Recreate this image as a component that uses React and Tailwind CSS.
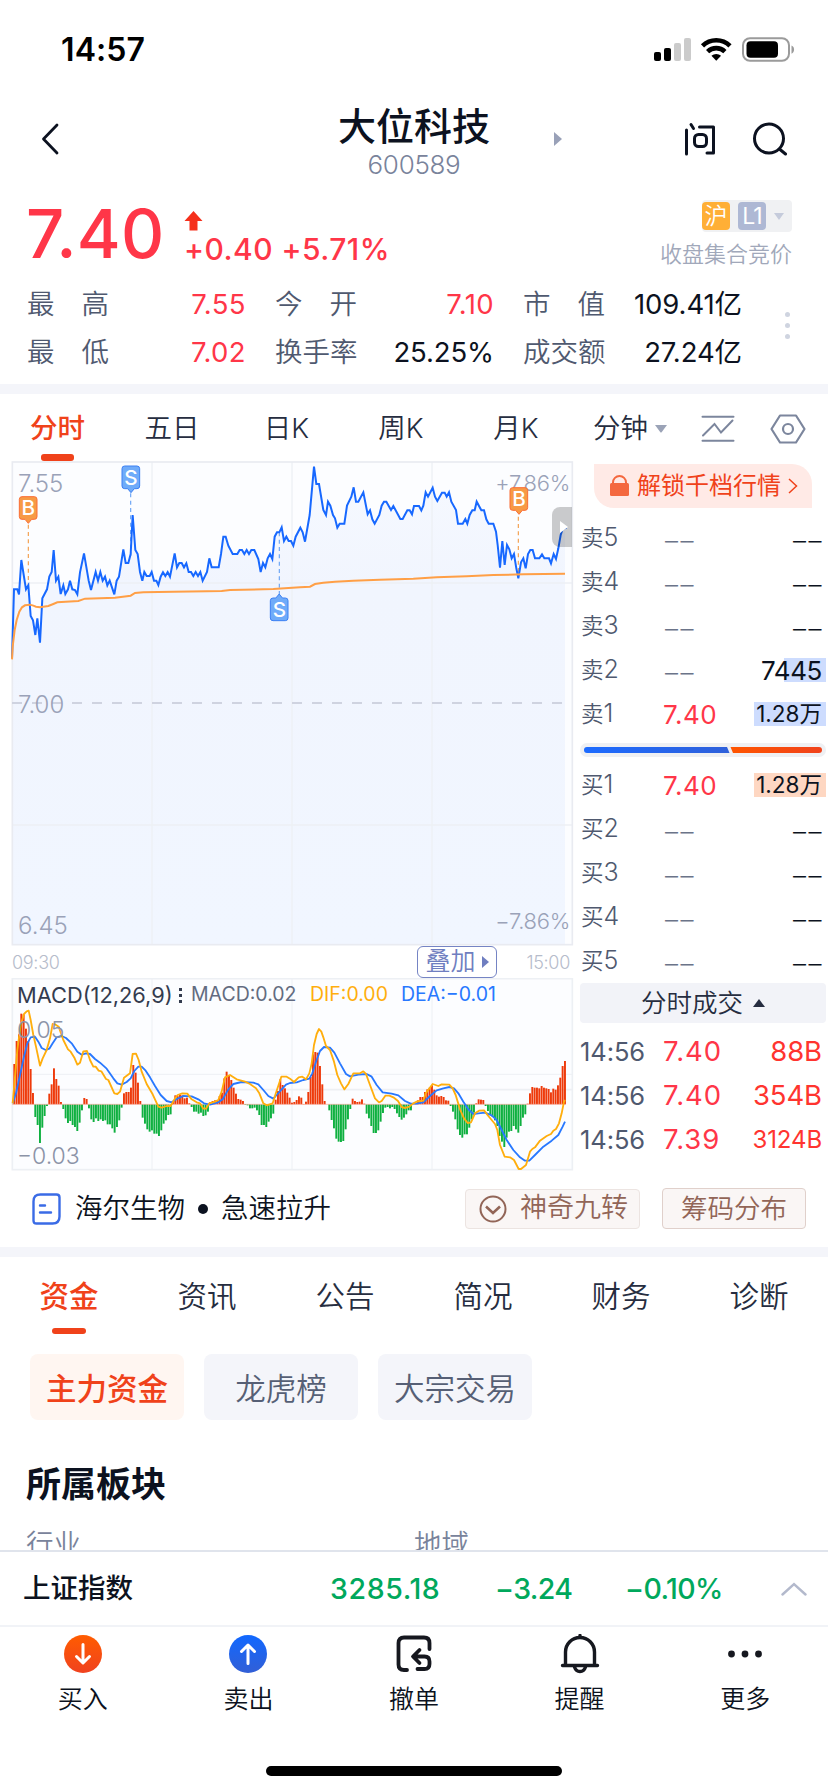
import { clsx } from "clsx";

const stats = [
  [
    { label: ["最", "高"], value: "7.55", up: true },
    { label: ["今", "开"], value: "7.10", up: true },
    { label: ["市", "值"], value: "109.41亿" },
  ],
  [
    { label: ["最", "低"], value: "7.02", up: true },
    { label: ["换", "手", "率"], value: "25.25%" },
    { label: ["成", "交", "额"], value: "27.24亿" },
  ],
];

const sells = [
  { name: "卖5" },
  { name: "卖4" },
  { name: "卖3" },
  { name: "卖2", volume: "7445", depth: 42 },
  { name: "卖1", price: "7.40", volume: "1.28万", depth: 72 },
];

const buys = [
  { name: "买1", price: "7.40", volume: "1.28万", depth: 72 },
  { name: "买2" },
  { name: "买3" },
  { name: "买4" },
  { name: "买5" },
];

const trades = [
  { time: "14:56", price: "7.40", volume: "88B" },
  { time: "14:56", price: "7.40", volume: "354B" },
  { time: "14:56", price: "7.39", volume: "3124B", small: true },
];

// chart data, three units per pixel
const PRICE =
  "36,805 42,598 52,598 57,613 64,510 78,598 85,586 92,678 99,691 106,735 112,685 120,758 127,625 141,598 148,560 155,546 161,480 168,572 175,560 182,612 190,586 196,612 204,598 210,572 217,598 225,600 232,613 240,547 252,490 266,572 273,600 287,546 294,572 301,546 308,572 315,560 322,586 329,572 343,613 350,572 357,560 370,478 377,519 385,519 392,492 398,375 406,480 413,492 420,546 427,572 433,546 440,558 449,558 455,546 462,572 469,572 475,585 482,560 489,547 496,558 503,546 510,560 524,490 531,532 538,519 545,519 552,532 559,520 566,546 573,546 580,558 587,546 594,558 601,546 608,572 621,546 628,505 635,532 656,532 663,492 670,440 677,440 685,467 698,492 712,492 719,480 726,480 733,492 740,480 747,492 754,480 763,480 775,507 782,546 789,519 796,532 803,505 810,492 817,507 824,440 831,427 838,427 845,412 852,453 859,440 866,453 873,453 880,467 887,440 901,413 908,427 915,455 929,375 942,230 949,282 957,282 970,360 978,375 984,335 991,347 999,375 1005,385 1012,413 1019,401 1033,401 1041,347 1054,320 1061,292 1068,335 1075,335 1090,307 1103,373 1110,361 1117,388 1124,401 1138,375 1145,347 1152,335 1159,335 1173,360 1180,348 1201,387 1208,387 1222,361 1229,361 1236,373 1242,348 1257,348 1264,361 1270,347 1277,307 1284,320 1298,293 1305,320 1312,333 1326,308 1334,308 1340,320 1347,307 1354,335 1368,360 1374,401 1388,401 1396,387 1402,401 1409,375 1417,361 1424,361 1430,335 1444,361 1452,361 1459,388 1466,401 1480,401 1488,425 1493,465 1500,533 1507,453 1514,525 1521,465 1528,478 1535,505 1542,492 1549,535 1555,565 1563,517 1570,505 1577,535 1584,492 1591,480 1598,480 1605,505 1618,505 1626,493 1633,505 1647,505 1653,520 1661,492 1668,507 1675,475 1682,435 1688,417 1700,413";

const AVERAGE =
  "36,808 38,770 44,720 50,690 58,665 66,652 75,646 90,644 100,647 108,650 120,652 145,648 160,642 172,637 235,633 255,626 345,623 392,617 405,609 430,607 520,605 620,604 665,603 690,600 820,597 900,592 930,590 945,582 970,578 1005,575 1060,572 1140,569 1240,566 1310,562 1400,559 1480,555 1570,553 1695,551";

const DIF =
  "38,430 45,350 52,270 62,195 72,162 80,154 86,152 92,180 100,225 108,260 120,317 128,295 140,270 150,235 158,192 165,193 176,200 190,240 204,268 212,275 224,295 232,314 240,308 250,274 261,273 270,300 280,320 287,320 296,332 304,334 318,357 325,360 343,400 352,402 360,395 372,353 390,340 398,282 408,281 416,300 425,335 440,372 458,403 475,440 485,443 500,438 512,438 525,415 533,405 547,400 562,401 575,418 590,427 600,430 610,446 618,446 628,430 645,425 655,420 665,395 675,352 690,345 710,358 735,365 750,372 768,385 778,400 790,430 800,436 818,430 830,392 844,350 860,350 870,356 882,366 896,352 907,350 918,358 928,340 935,310 942,255 950,222 957,207 964,215 970,232 978,258 990,270 1002,305 1012,345 1023,370 1033,388 1045,372 1060,340 1080,340 1090,334 1098,342 1110,375 1125,415 1137,427 1145,423 1156,407 1168,407 1180,412 1194,423 1205,441 1215,444 1228,440 1240,430 1252,424 1270,422 1277,400 1298,372 1315,378 1325,373 1348,374 1358,385 1367,405 1380,448 1392,475 1403,489 1413,487 1425,460 1437,452 1452,451 1465,468 1485,492 1492,510 1500,555 1514,590 1530,592 1542,600 1556,627 1563,627 1578,615 1590,575 1597,567 1605,562 1620,542 1640,528 1653,522 1660,512 1668,507 1677,490 1685,460 1692,425 1695,420";

const DEA =
  "38,430 48,400 60,345 72,290 82,250 92,232 105,230 115,245 125,264 137,270 148,266 158,250 170,232 185,228 198,234 215,250 232,275 245,284 258,280 270,282 285,297 300,308 320,326 340,355 352,370 365,374 380,366 392,355 403,333 415,320 425,320 437,332 450,352 465,378 482,405 500,423 515,427 530,417 550,408 575,409 595,418 612,430 630,434 655,427 668,418 685,388 700,372 725,366 760,368 775,373 790,390 805,408 820,416 830,405 845,388 858,374 870,369 890,367 910,360 928,356 937,340 948,305 960,273 972,261 990,263 1003,278 1020,310 1038,342 1050,349 1075,344 1100,342 1115,350 1130,375 1148,397 1175,401 1195,406 1215,423 1232,431 1250,431 1270,427 1290,408 1310,391 1330,385 1348,381 1362,385 1375,400 1390,425 1405,448 1420,462 1435,460 1455,458 1475,466 1490,480 1505,510 1520,540 1540,570 1560,592 1575,602 1588,602 1605,585 1630,560 1655,542 1675,525 1688,500 1695,485";

const BARS = [
  121, 190, 210, 272, 270, 227, 190, 106, 34, -38, -62, -116, -70, -35, -5, 32, 60, 108, 76, 56, 7, -14, -42, -56,
  -50, -62, -68, -80, -55, -18, 19, 16, -12, -45, -53, -42, -50, -45, -50, -48, -60, -60, -72, -85, -68, -48, -10, 33,
  37, 37, 50, 118, 95, 65, 10, -40, -58, -75, -82, -78, -88, -88, -95, -78, -58, -48, -32, -30, 8, 27, 25, 28,
  27, 18, 20, 3, -8, -22, -22, -28, -25, -35, -33, -22, 7, 10, 12, 12, 25, 35, 78, 98, 88, 73, 50, 32,
  16, 14, 10, -2, -3, -12, -12, -10, -18, -32, -62, -62, -68, -52, -42, -28, 14, 40, 75, 58, 48, 35, 20, 5,
  7, 13, 24, 20, 1, 8, 37, 82, 150, 157, 155, 115, 60, 10, 0, -18, -47, -72, -103, -112, -113, -110, -75, -45,
  -14, 17, 10, 7, 8, 15, 2, -28, -42, -65, -86, -86, -78, -52, -26, -10, -8, -12, -8, -14, -27, -38, -46, -40,
  -30, -18, -18, 0, 5, 12, 22, 22, 37, 45, 50, 57, 44, 27, 23, 25, 22, 12, 11, -5, -22, -45, -75, -92,
  -100, -90, -90, -70, -45, -25, 3, 15, 14, 13, -5, -20, -30, -38, -48, -65, -95, -112, -128, -100, -82, -80, -65, -75,
  -85, -65, -40, -30, 2, 33, 52, 50, 50, 48, 55, 50, 48, 46, 36, 47, 44, 57, 80, 115, 130,
];

function StatusBar() {
  return (
    <div className="flex h-[86px] items-start justify-between pt-[30px] pr-[33px] pl-[61px]">
      <span className="text-[32px] leading-[40px] font-semibold tracking-[0.1px] text-black">14:57</span>
      <svg className="mt-[6px]" width="142" height="28" viewBox="0 0 142 28">
        <rect x="1" y="16" width="7" height="9" rx="2" />
        <rect x="11" y="12" width="7" height="13" rx="2" />
        <rect x="21" y="7" width="7" height="18" rx="2" fill="#cbcbcb" />
        <rect x="31" y="2" width="7" height="23" rx="2" fill="#cbcbcb" />
        <g fill="none" stroke="#000" strokeWidth="4.6">
          <path d="M49.5 9.8a20 20 0 0 1 27.5 0" />
          <path d="M54.6 15.6a12.5 12.5 0 0 1 17.3 0" />
        </g>
        <path d="M63.25 24.8l-4.8-5a7 7 0 0 1 9.6 0z" />
        <rect x="90" y="2.2" width="46" height="22.6" rx="7" fill="none" stroke="#9b9b9b" strokeWidth="2" />
        <rect x="93.5" y="5.3" width="31.5" height="16.4" rx="4" />
        <path d="M138.5 9.5c3.4 1.2 3.4 7 0 8.200z" fill="#9b9b9b" />
      </svg>
    </div>
  );
}

function Header() {
  return (
    <div className="grid h-[106px] grid-cols-[1fr_152px_1fr] items-center text-[#0c1220]">
      <div className="pl-[40px]">
        <svg width="20" height="34" viewBox="0 0 20 34" fill="none" stroke="currentColor" strokeWidth="2.8" strokeLinecap="round" strokeLinejoin="round">
          <path d="M17 3L3.500 17L17 31" />
        </svg>
      </div>
      <div className="flex flex-col items-center pt-[7px]">
        <h1 className="text-[38px] leading-[44px] font-medium whitespace-nowrap">大位科技</h1>
        <span className="text-[26px] leading-[34px] tracking-[-0.3px] text-[#79839b]">600589</span>
      </div>
      <div className="flex items-center justify-between pr-[40px] pl-[64px]">
        <svg width="8" height="14" viewBox="0 0 8 14" fill="#99a1b8">
          <path d="M0 0L8 7L0 14z" />
        </svg>
        <div className="flex items-center gap-[36px]">
          <svg width="32" height="34" viewBox="0 0 32 34" fill="none" stroke="currentColor" strokeWidth="3" strokeLinecap="round" strokeLinejoin="round">
            <path d="M2.500 8V32M7 2.500L9.500 6.500M15.500 5H29.500V31H23" />
            <rect x="10.500" y="12.500" width="12" height="12" rx="4" />
          </svg>
          <svg width="36" height="34" viewBox="0 0 36 34" fill="none" stroke="currentColor" strokeWidth="3" strokeLinecap="round">
            <circle cx="17" cy="16.500" r="14.500" />
            <path d="M28 27.500L33.500 32" />
          </svg>
        </div>
      </div>
    </div>
  );
}

function Quote() {
  return (
    <section className="flex h-[192px] flex-col pl-[27px]">
      <div className="flex h-[88px] justify-between pr-[36px]">
        <div className="flex">
          <span className="-ml-px w-[158px] pt-[2px] text-[67px] leading-[80px] font-medium tracking-[0.3px] text-[#ff3648]">7.40</span>
          <div className="flex flex-col pt-[19px]">
            <svg width="19" height="20" viewBox="0 0 19 20" fill="#f5301c">
              <path d="M9.500 0L18.500 10H13.500V19.500H5.500V10H.5z" />
            </svg>
            <span className="text-[30px] leading-[36px] font-medium tracking-[0.45px] whitespace-pre text-[#ff3648]">+0.40 +5.71%</span>
          </div>
        </div>
        <div className="flex flex-col items-end pt-[8px]">
          <div className="flex h-8 items-center gap-2 rounded bg-[#f0f1f3] pr-2 text-[23px] leading-[28px] text-white">
            <span className="flex size-7 items-center justify-center rounded bg-[#ffaf36]">沪</span>
            <span className="flex size-7 items-center justify-center rounded bg-[#aeb8d4] font-normal tracking-[-1px]">L1</span>
            <svg width="10" height="7" viewBox="0 0 10 7" fill="#c5cbdb">
              <path d="M0 0H10L5 7z" />
            </svg>
          </div>
          <span className="pt-[6px] text-[22px] leading-[32px] text-[#a1a8ba]">收盘集合竞价</span>
        </div>
      </div>
      <div className="flex pt-px">
        <div className="flex w-[715px] flex-col">
          {stats.map((row, i) => (
            <div key={i} className="grid h-[48px] grid-cols-[219px_219px_219px] items-center gap-x-[29px] text-[27.500px]">
              {row.map((s) => (
                <div key={s.value} className="flex items-center justify-between">
                  <span className="flex w-[82px] justify-between text-[#4f596f]">
                    {s.label.map((c) => (
                      <span key={c}>{c}</span>
                    ))}
                  </span>
                  <span className={clsx("text-[27.500px] font-[380]", s.up ? "tracking-[0.4px] text-[#ff3648]" : "tracking-[-0.1px] text-[#0c1220]")}>{s.value}</span>
                </div>
              ))}
            </div>
          ))}
        </div>
        <div className="ml-[43px] flex flex-col gap-[6px] pt-[31px]">
          <i className="size-[5px] rounded-full bg-[#cfd4e0]" />
          <i className="size-[5px] rounded-full bg-[#cfd4e0]" />
          <i className="size-[5px] rounded-full bg-[#cfd4e0]" />
        </div>
      </div>
    </section>
  );
}

function PeriodTabs() {
  return (
    <nav className="flex h-[67px] items-center pt-[2px] text-[27.500px] text-[#262d40]">
      <span className="relative w-[115px] text-center font-medium text-[#f0421a]">
        分时
        <i className="absolute -bottom-[12px] left-[41px] h-[7px] w-[33px] rounded-[3px] bg-[#f0421a]" />
      </span>
      <span className="w-[114px] text-center">五日</span>
      <span className="w-[115px] text-center">日K</span>
      <span className="w-[114px] text-center">周K</span>
      <span className="w-[116px] text-center">月K</span>
      <span className="flex w-[127px] items-center gap-[7px] pl-[19px]">
        分钟
        <svg width="12" height="8" viewBox="0 0 12 8" fill="#9ba3b7">
          <path d="M0 0H12L6.800 7Q6 8 5.200 7z" />
        </svg>
      </span>
      <span className="flex flex-1 items-center justify-between pr-[22px]">
        <svg width="34" height="28" viewBox="0 0 34 28" fill="none" stroke="#7c869d" strokeWidth="2" strokeLinecap="round">
          <path d="M1.500 1.700H32.500M1.500 25.700H32.500M2 20.500L13.500 9L20 17.500L31.500 5.500" />
        </svg>
        <svg width="36" height="30" viewBox="0 0 36 30" fill="none" stroke="#7c869d" strokeWidth="2.200" strokeLinejoin="round">
          <path d="M10 1.500H26L34.500 15L26 28.500H10L1.500 15z" />
          <circle cx="18" cy="15" r="5" />
        </svg>
      </span>
    </nav>
  );
}

function Marker({ x, y, letter, up }) {
  const buy = letter === "B";
  // tail sits below the box, or above it when the marker hangs under the line
  const d = up
    ? `M${x + 8},${y} h8.5 l10,-12 l10,12 h8.5 q8,0 8,8 v52 q0,8 -8,8 h-37 q-8,0 -8,-8 v-52 q0,-8 8,-8 z`
    : `M${x + 8},${y} h37 q8,0 8,8 v52 q0,8 -8,8 h-8 l-10,12 l-10,-12 h-9 q-8,0 -8,-8 v-52 q0,-8 8,-8 z`;
  return (
    <g>
      <path d={d} fill={buy ? "#f79a45" : "#6fabf9"} stroke={buy ? "#fb6d34" : "#3d80f3"} strokeWidth="3" />
      <text x={x + 27} y={y + 56} textAnchor="middle" fontSize="62" fontWeight="500" fill="#fff">
        {letter}
      </text>
    </g>
  );
}

function PriceChart() {
  return (
    <div className="relative h-[485px] text-[#9aa2b8]">
      <svg width="576" height="485" viewBox="0 213 1728 1455">
        <defs>
          <linearGradient id="area" x1="0" y1="0" x2="0" y2="1">
            <stop offset="0" stopColor="#f6f9ff" />
            <stop offset="0.25" stopColor="#f1f5fe" />
            <stop offset="1" stopColor="#f1f6ff" />
          </linearGradient>
        </defs>
        <rect x="36" y="216" width="1682" height="1448" fill="#fcfdff" />
        <path d={`M36,1664 L${PRICE} L1695,413 V1664 z`} fill="url(#area)" />
        <g fill="none" stroke="#edf0f5" strokeWidth="4">
          <path d="M456,216V1664M876,216V1664M1296,216V1664M36,579H1718M36,1305H1718" />
        </g>
        <rect x="37" y="216" width="1680" height="1448" fill="none" stroke="#e9ebf1" strokeWidth="5" />
        <path d="M36,939H1700" stroke="#cfd3e0" strokeWidth="6" strokeDasharray="30 30" />
        <g fill="none" strokeWidth="3.500" strokeDasharray="12 10">
          <path d="M85,404V586M1555,380V560" stroke="#f4a04e" />
          <path d="M392,310V500M838,427V612" stroke="#6ca5f5" />
        </g>
        <polyline points={PRICE} fill="none" stroke="#1768ff" strokeWidth="6" />
        <polyline points={AVERAGE} fill="none" stroke="#ff9f46" strokeWidth="6" />
      </svg>
      <span className="absolute top-[5px] left-[18px] text-[24px] leading-[36px] font-light">7.55</span>
      <span className="absolute top-[4px] right-[6px] text-[22px] leading-[36px] font-light tracking-[-0.3px]">+7.86%</span>
      <span className="absolute top-[226px] left-[18px] text-[24px] leading-[36px] font-light">7.00</span>
      <span className="absolute top-[447px] left-[18px] text-[24px] leading-[36px] font-light">6.45</span>
      <span className="absolute top-[442px] right-[6px] text-[22px] leading-[36px] font-light tracking-[-0.3px]">−7.86%</span>
      <svg className="absolute top-0 left-0" width="576" height="485" viewBox="0 213 1728 1455">
        <Marker x={58} y={320} letter="B" />
        <Marker x={366} y={228} letter="S" />
        <Marker x={811} y={624} letter="S" up />
        <Marker x={1530} y={293} letter="B" />
      </svg>
      <div className="absolute top-[46px] left-[552px] flex h-[40px] w-[20px] items-center justify-center rounded-l-lg bg-black/20 pl-[3px]">
        <svg width="8" height="12" viewBox="0 0 8 12" fill="#fff">
          <path d="M0 0L8 6L0 12z" />
        </svg>
      </div>
    </div>
  );
}

function MacdChart() {
  return (
    <div className="relative h-[193px]">
      <svg width="576" height="193" viewBox="0 54 1728 579">
        <rect x="36" y="56" width="1682" height="573" fill="#fcfdff" />
        <g fill="none" stroke="#edf0f4" strokeWidth="5">
          <path d="M456,56V629M876,56V629M1296,56V629M36,343H1718" strokeWidth="3" />
          <path d="M36,389H1718" />
          <rect x="37" y="56" width="1680" height="573" />
        </g>
        {BARS.map((v, i) => (
          <rect
            key={i}
            x={40 + i * 7}
            y={v > 0 ? 433 - v : 433}
            width="5.800"
            height={Math.abs(v)}
            fill={v > 0 ? "#ee3a0b" : "#0fb040"}
          />
        ))}
        <path d="M36,433H1697" stroke="#f7a99a" strokeWidth="2" />
        <polyline points={DEA} fill="none" stroke="#2878ff" strokeWidth="5.500" strokeLinejoin="round" />
        <polyline points={DIF} fill="none" stroke="#ffae0d" strokeWidth="5.500" strokeLinejoin="round" />
      </svg>
      <div className="absolute top-[2px] left-[17px] flex h-[30px] items-center text-[19.500px] font-normal whitespace-nowrap">
        <span className="w-[161px] text-[21.800px] text-[#333b4e]">MACD(12,26,9)</span>
        <span className="flex w-[13px] flex-col gap-[3px] pl-px">
          <i className="size-[3px] bg-[#333b4e]" />
          <i className="size-[3px] bg-[#333b4e]" />
          <i className="size-[3px] bg-[#333b4e]" />
        </span>
        <span className="w-[119px] text-[#626b80]">MACD:0.02</span>
        <span className="w-[91px] text-[#ffae0d]">DIF:0.00</span>
        <span className="text-[#2878ff]">DEA:−0.01</span>
      </div>
      <span className="absolute top-[34px] left-[17px] text-[23px] leading-[36px] font-light text-[#8b93a7]">0.05</span>
      <span className="absolute top-[160px] left-[17px] text-[23px] leading-[36px] font-light text-[#8b93a7]">−0.03</span>
    </div>
  );
}

function Level({ name, price, volume, depth = 0, side }) {
  return (
    <div className="flex h-[44px] items-center text-[26px] text-[#4f596f]">
      <span className="w-[83px] pl-px text-[22.500px]">
        {name.slice(0, 1)}
        <span className="text-[25px]">{name.slice(1)}</span>
      </span>
      {price ? (
        <span className="font-[380] tracking-[0.5px] text-[#ff3648]">{price}</span>
      ) : (
        <span className="pt-[5px] pl-[2px] tracking-[2.500px] text-[#6b7489]">––</span>
      )}
      <span className="relative ml-auto flex h-6 items-center pr-[4px] text-[#0c1220]">
        <i
          className={clsx("absolute inset-y-0 right-0", side === "buy" ? "bg-[#fed7c2]" : "bg-[#cddcfe]")}
          style={{ width: depth }}
        />
        {volume ? (
          <span className={clsx("relative font-[380]", volume.endsWith("万") ? "text-[22.500px]" : "text-[26px] tracking-[-0.4px]")}>{volume}</span>
        ) : (
          <span className="-mr-[2px] pt-[5px] tracking-[2.500px]">––</span>
        )}
      </span>
    </div>
  );
}

function OrderBook() {
  return (
    <aside className="flex w-[248px] flex-col pr-[2px]">
      <div className="mt-[3px] ml-[14px] flex h-[44px] w-[218px] items-center rounded-tr-[20px] rounded-bl-[20px] bg-[#ffeae6] pl-[16px] text-[#f0421a]">
        <svg width="19" height="22" viewBox="0 0 19 22">
          <rect y="8" width="19" height="13" rx="1.500" fill="#f4683f" />
          <path d="M3 9V7.500a6.500 6.500 0 0 1 13 0V9" fill="none" stroke="#f4683f" strokeWidth="2" />
        </svg>
        <span className="pl-[8px] text-[24px] font-normal">解锁千档行情</span>
        <svg className="ml-[7px]" width="10" height="16" viewBox="0 0 10 16" fill="none" stroke="#f0421a" strokeWidth="1.500">
          <path d="M1 1L8.500 8L1 15" />
        </svg>
      </div>
      <div className="flex flex-col pt-[8px]">
        {sells.map((l) => (
          <Level key={l.name} side="sell" {...l} />
        ))}
      </div>
      <div className="mt-[7px] mb-[6px] flex h-[14px] items-center rounded-full bg-[#eff0f3] px-1">
        <svg width="238" height="6" viewBox="0 0 238 6">
          <defs>
            <linearGradient id="sellBar">
              <stop stopColor="#1d6bff" />
              <stop offset="1" stopColor="#2f60da" />
            </linearGradient>
            <linearGradient id="buyBar">
              <stop stopColor="#ff5500" />
              <stop offset="1" stopColor="#f0431c" />
            </linearGradient>
          </defs>
          <path d="M3 0H143L145.500 6H3a3 3 0 0 1 0-6z" fill="url(#sellBar)" />
          <path d="M146.500 0H235a3 3 0 0 1 0 6H149z" fill="url(#buyBar)" />
        </svg>
      </div>
      <div className="flex flex-col">
        {buys.map((l) => (
          <Level key={l.name} side="buy" {...l} />
        ))}
      </div>
      <div className="flex h-[40px] items-center justify-center gap-[10px] rounded bg-[#f2f3f8] text-[25.500px] text-[#262d40]">
        分时成交
        <svg width="12" height="8" viewBox="0 0 12 8" fill="#262d40">
          <path d="M6 0L12 8H0z" />
        </svg>
      </div>
      <div className="flex flex-col pt-[7px]">
        {trades.map((t, i) => (
          <div key={i} className="flex h-[44px] items-center text-[27.500px] font-[380]">
            <span className="w-[83px] text-[25.500px] tracking-[-0.1px] text-[#4f596f]">{t.time}</span>
            <span className="tracking-[1px] text-[#ff3648]">{t.price}</span>
            <span className={clsx("ml-auto pr-[4px] text-[#ff342f]", t.small ? "text-[24px] tracking-[-0.1px]" : "text-[27.500px] tracking-[-0.1px]")}>{t.volume}</span>
          </div>
        ))}
      </div>
    </aside>
  );
}

function NewsRow() {
  return (
    <div className="flex h-[77px] items-center justify-between pr-[22px] pl-[32px]">
      <div className="flex items-center">
        <svg width="29" height="32" viewBox="0 0 29 32" fill="none" stroke="#3a6be6" strokeWidth="2.400" strokeLinecap="round">
          <path d="M8.500 1.500H24.500Q27.500 1.500 27.500 4.500V23.500Q27.500 30.500 20.500 30.500H4.500Q1.500 30.500 1.500 27.500V8.500Q1.500 1.500 8.500 1.500z" strokeLinejoin="round" />
          <path d="M8 12.500H13M8 19.500H19" />
        </svg>
        <span className="pl-[14px] text-[27.500px] text-[#0c1220]">海尔生物</span>
        <i className="mx-[13px] size-[10px] rounded-full bg-[#0c1220]" />
        <span className="text-[27.500px] text-[#0c1220]">急速拉升</span>
      </div>
      <div className="flex items-center gap-[22px] text-[#926557]">
        <div className="flex h-[40px] w-[175px] items-center justify-center gap-[13px] rounded border-[1.500px] border-[#ece4e1] bg-[#faf6f5] pl-[2px] text-[27px]">
          <svg width="28" height="28" viewBox="0 0 28 28" fill="none" stroke="currentColor" strokeWidth="2">
            <circle cx="14" cy="14" r="12.500" />
            <path d="M7 11.500L14 18L21 11.500" strokeWidth="2.600" />
          </svg>
          神奇九转
        </div>
        <div className="flex h-[41px] w-[144px] items-center justify-center rounded border-[1.500px] border-[#e0d0cb] bg-[#faf6f5] text-[26.500px]">筹码分布</div>
      </div>
    </div>
  );
}

function InfoSection() {
  const tabs = ["资金", "资讯", "公告", "简况", "财务", "诊断"];
  const chips = ["主力资金", "龙虎榜", "大宗交易"];
  return (
    <section className="flex h-[293px] flex-col overflow-hidden">
      <nav className="grid h-[78px] shrink-0 grid-cols-6 text-center text-[29.500px] leading-[78px] text-[#262d40]">
        {tabs.map((t, i) => (
          <span key={t} className={clsx("relative", i === 0 && "font-medium text-[#f0421a]")}>
            {t}
            {i === 0 && <i className="absolute top-[71px] left-[52px] h-[6px] w-[34px] rounded-[3px] bg-[#f0421a]" />}
          </span>
        ))}
      </nav>
      <div className="mt-[19px] flex shrink-0 gap-[20px] pl-[30px]">
        {chips.map((c, i) => (
          <span
            key={c}
            className={clsx(
              "flex h-[66px] w-[154px] items-center justify-center rounded-lg pt-[3px] text-[30.500px]",
              i === 0 ? "bg-[#fff6f1] font-medium text-[#f0421a]" : "bg-[#f4f5fa] text-[#565f75]"
            )}
          >
            {c}
          </span>
        ))}
      </div>
      <h2 className="mt-[40px] pl-[26px] text-[35px] leading-[48px] font-bold text-[#0c1220]">所属板块</h2>
      <div className="mt-[16px] grid shrink-0 grid-cols-2 text-[27.500px] leading-[40px] text-[#79839b]">
        <span className="pl-[26px]">行业</span>
        <span>地域</span>
      </div>
    </section>
  );
}

function IndexBar() {
  return (
    <div className="flex h-[77px] items-center border-t-2 border-b-2 border-t-[#e0e4ec] border-b-[#f1f3f7] pt-px pr-[21px] pl-[23px] text-[28.500px] font-medium tracking-[-0.6px] text-[#00a85c]">
      <span className="w-[307px] text-[27.500px] tracking-normal text-[#0c1220]">上证指数</span>
      <span className="w-[165px] tracking-[0.6px]">3285.18</span>
      <span className="w-[130px]">−3.24</span>
      <span>−0.10%</span>
      <svg className="ml-auto" width="26" height="14" viewBox="0 0 26 14" fill="none" stroke="#b3b9cc" strokeWidth="2.400" strokeLinecap="round">
        <path d="M1.500 12.500L13 2L24.500 12.500" />
      </svg>
    </div>
  );
}

function ActionBar() {
  const actions = [
    { label: "买入", icon: <CircleArrow id="buy" from="#ff5c00" to="#f0421f" /> },
    { label: "卖出", icon: <CircleArrow id="sell" from="#1168ff" to="#325fd6" up /> },
    {
      label: "撤单",
      icon: (
        <svg width="40" height="40" viewBox="0 0 40 40" fill="none" stroke="#16181f" strokeWidth="3.800" strokeLinecap="round" strokeLinejoin="round">
          <path d="M13 36H10Q4.500 36 4.500 30.500V9Q4.500 3.500 10 3.500H30Q35.500 3.500 35.500 9V15" />
          <path d="M25.500 16L19 22.500L25.500 29M20 22.500H30.500Q35.500 22.500 35.500 27.500V30Q35.500 35 30.500 35H23.500" />
        </svg>
      ),
    },
    {
      label: "提醒",
      icon: (
        <svg width="40" height="40" viewBox="0 0 40 40" fill="none" stroke="#16181f" strokeWidth="3.400" strokeLinecap="round" strokeLinejoin="round">
          <path d="M2.500 31.500H37.500M5.500 31V18a14.500 14.500 0 0 1 29 0V31M20 1.500V3.500M14.500 33Q16 37.500 20 37.500Q24 37.500 25.500 33" />
        </svg>
      ),
    },
    {
      label: "更多",
      icon: (
        <svg width="40" height="40" viewBox="0 0 40 40" fill="#16181f">
          <circle cx="6.500" cy="20" r="3.400" />
          <circle cx="20" cy="20" r="3.400" />
          <circle cx="33.500" cy="20" r="3.400" />
        </svg>
      ),
    },
  ];
  return (
    <div className="grid h-[139px] grid-cols-5 pt-[7px]">
      {actions.map((a) => (
        <div key={a.label} className="flex flex-col items-center">
          {a.icon}
          <span className="mt-[7px] text-[25px] leading-[36px] text-[#0c1220]">{a.label}</span>
        </div>
      ))}
    </div>
  );
}

function CircleArrow({ id, from, to, up }) {
  return (
    <svg width="40" height="40" viewBox="0 0 40 40">
      <defs>
        <linearGradient id={id} x1="0" y1="0" x2="0" y2="1">
          <stop stopColor={from} />
          <stop offset="1" stopColor={to} />
        </linearGradient>
      </defs>
      <circle cx="20" cy="20" r="19" fill={`url(#${id})`} />
      <path
        d={up ? "M20 29.500V12M13.500 17.500L20 11L26.500 17.500" : "M20 10.500V28M13.500 22.500L20 29L26.500 22.500"}
        fill="none"
        stroke="#fff"
        strokeWidth="3"
        strokeLinecap="round"
        strokeLinejoin="round"
      />
    </svg>
  );
}

export default function App() {
  return (
    <div className="flex h-[1792px] w-[828px] flex-col overflow-hidden bg-white font-['Inter','Noto_Sans_CJK_SC',sans-serif] font-[350]">
      <StatusBar />
      <Header />
      <Quote />
      <div className="h-[10px] bg-[#f4f5fa]" />
      <PeriodTabs />
      <div className="flex h-[709px]">
        <div className="flex w-[576px] flex-col">
          <PriceChart />
          <div className="flex h-[32px] items-center pr-[6px] pl-[12px] text-[18px] tracking-[-0.3px] text-[#b6bccb]">
            09:30
            <span className="mr-[29px] ml-auto flex h-[32px] w-[80px] items-center justify-center gap-[7px] rounded-md border-[1.500px] border-[#7584c4] text-[25px] tracking-normal text-[#6f7ec0]">
              叠加
              <svg width="7" height="12" viewBox="0 0 7 12" fill="#6f7ec0">
                <path d="M0 0L7 6L0 12z" />
              </svg>
            </span>
            15:00
          </div>
          <MacdChart />
        </div>
        <div className="flex w-[252px] pl-[4px]">
          <OrderBook />
        </div>
      </div>
      <NewsRow />
      <div className="h-[10px] bg-[#f4f5fa]" />
      <InfoSection />
      <IndexBar />
      <ActionBar />
      <div className="flex justify-center">
        <div className="h-[10px] w-[296px] rounded-full bg-black" />
      </div>
    </div>
  );
}
